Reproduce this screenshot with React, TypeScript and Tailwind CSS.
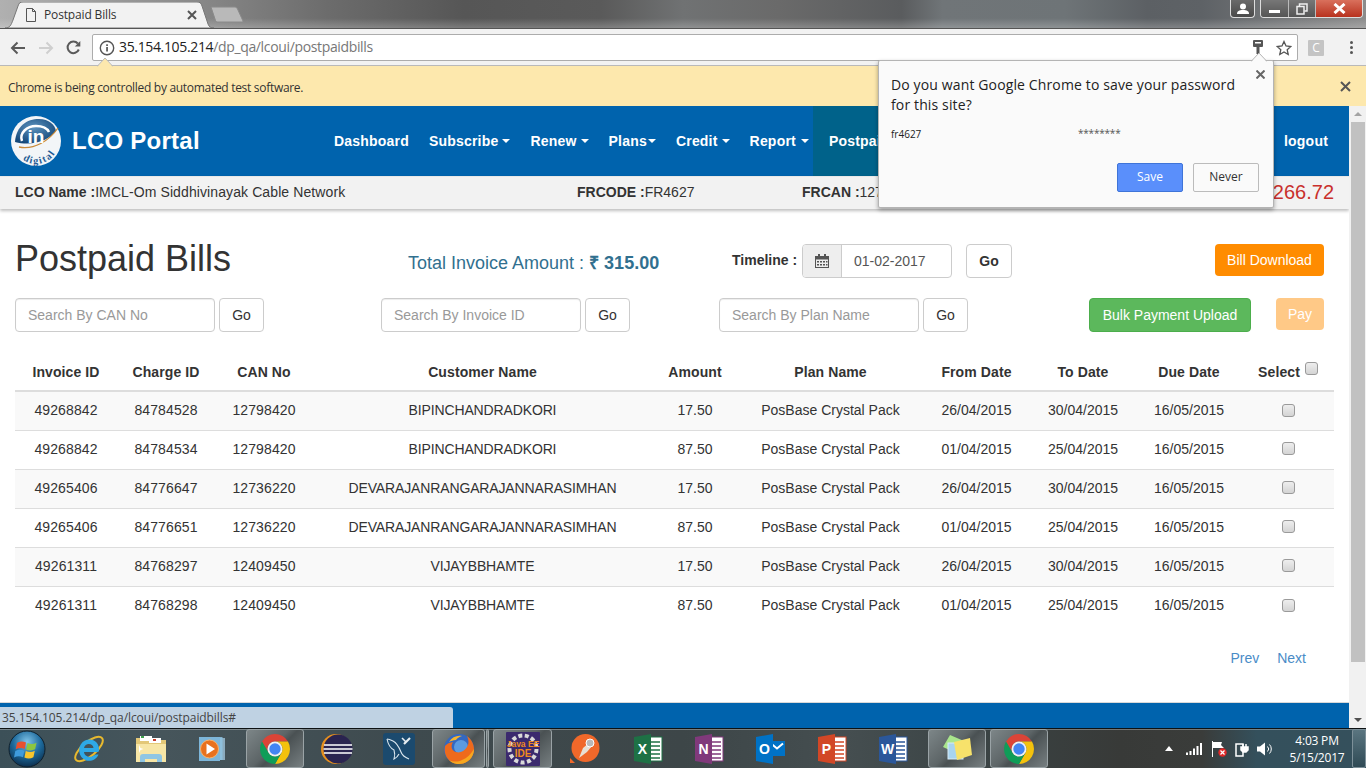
import React from "react";

const sans = "font-['Liberation_Sans',Arial,sans-serif]";
const ui = "font-['Open_Sans','Noto_Sans',sans-serif]";

const rows = [
  ["49268842", "84784528", "12798420", "BIPINCHANDRADKORI", "17.50", "26/04/2015", "30/04/2015"],
  ["49268842", "84784534", "12798420", "BIPINCHANDRADKORI", "87.50", "01/04/2015", "25/04/2015"],
  ["49265406", "84776647", "12736220", "DEVARAJANRANGARAJANNARASIMHAN", "17.50", "26/04/2015", "30/04/2015"],
  ["49265406", "84776651", "12736220", "DEVARAJANRANGARAJANNARASIMHAN", "87.50", "01/04/2015", "25/04/2015"],
  ["49261311", "84768297", "12409450", "VIJAYBBHAMTE", "17.50", "26/04/2015", "30/04/2015"],
  ["49261311", "84768298", "12409450", "VIJAYBBHAMTE", "87.50", "01/04/2015", "25/04/2015"],
];

function ChromeIcon({ size = 30 }: { size?: number }) {
  return (
    <svg width={size} height={size} viewBox="4 4 40 40">
      <path d="M6.68 14A20 20 0 0 1 41.32 14H24A10 10 0 0 0 15.34 29Z" fill="#db4437" />
      <path d="M41.32 14A20 20 0 0 1 24 44L32.66 29A10 10 0 0 0 24 14Z" fill="#f4c20d" />
      <path d="M24 44A20 20 0 0 1 6.68 14L15.34 29A10 10 0 0 0 32.66 29Z" fill="#0f9d58" />
      <circle cx="24" cy="24" r="10" fill="#f1f1f1" />
      <circle cx="24" cy="24" r="7.6" fill="#4285f4" />
    </svg>
  );
}

function Office({ c, l }: { c: string; l: string }) {
  return (
    <svg width="30" height="32" viewBox="0 0 30 32">
      <rect x="13" y="4" width="16" height="24" fill="#fff" stroke={c} strokeWidth="1" />
      <path d="M17 9h10M17 13h10M17 17h10M17 21h10M17 25h10" stroke={c} strokeWidth="1.4" />
      <path d="M1 4L18 1V31L1 28Z" fill={c} />
      <text x="9.5" y="21" textAnchor="middle" fontSize="14" fontWeight="700" fill="#fff" fontFamily="Liberation Sans">{l}</text>
    </svg>
  );
}

function TaskIcon({ name }: { name: string }) {
  switch (name) {
    case "start":
      return (
        <svg width="38" height="38" viewBox="0 0 38 38">
          <defs>
            <radialGradient id="orb" cx="50%" cy="30%" r="70%">
              <stop offset="0" stopColor="#7fc3e8" />
              <stop offset="0.55" stopColor="#1d6a9c" />
              <stop offset="1" stopColor="#0c2f4e" />
            </radialGradient>
          </defs>
          <circle cx="19" cy="19" r="18" fill="url(#orb)" stroke="#10202c" strokeWidth="1" />
          <path d="M9 13c3-2 6-2 9-.5l-1.3 6.5c-3-1.4-6-1.4-9 .3Z" fill="#e8502e" />
          <path d="M19.5 13c3 1.4 6 1.4 9-.2l-1.4 6.5c-3 1.5-6 1.5-9 .2Z" fill="#8cc63f" />
          <path d="M7.3 21c3-1.6 6-1.6 9-.3l-1.3 6.5c-3-1.4-6-1.3-9 .3Z" fill="#3f9bdc" />
          <path d="M17.8 21c3 1.4 6 1.4 9-.2l-1.4 6.5c-3 1.6-6 1.6-9 .2Z" fill="#f7c52d" />
        </svg>
      );
    case "ie":
      return (
        <svg width="32" height="32" viewBox="0 0 32 32">
          <ellipse cx="16" cy="16" rx="17" ry="7" transform="rotate(-40 16 16)" fill="none" stroke="#e8b92e" strokeWidth="2" />
          <path d="M25 19H11c.3 4.500 6.500 7 11.500 2.500h3C23 28 15 29.500 10.500 26 4 21 5 11 12 7.500 19 4.500 27 9 26 18ZM11 15h9.500c-.3-5-8.500-5.500-9.500 0Z" fill="#2ea9e6" />
        </svg>
      );
    case "files":
      return (
        <svg width="32" height="30" viewBox="0 0 32 30">
          <path d="M1 4h10l2 2h18v22H1Z" fill="#e3c878" />
          <rect x="5" y="2" width="12" height="5" fill="#fff" />
          <rect x="6" y="2" width="3" height="2" fill="#3fa34d" />
          <rect x="14" y="4" width="12" height="5" fill="#fff" />
          <rect x="18" y="5" width="3" height="2" fill="#c8402e" />
          <path d="M1 10h30v18H1Z" fill="#f7e6a6" />
          <path d="M5 28v-5c0-2 1-3 3-3h16c2 0 3 1 3 3v5h-5v-3H10v3Z" fill="#8fc6e4" />
          <path d="M4 11l1.500 3 3 1-3 1-1.500 3" fill="#fff" />
        </svg>
      );
    case "wmp":
      return (
        <svg width="28" height="26" viewBox="0 0 28 26">
          <rect x="6" y="2" width="21" height="22" fill="#a9d2ea" opacity=".7" />
          <rect x="3.500" y="1" width="21" height="23" fill="#8ec2e0" opacity=".85" />
          <rect x="1" y="1" width="21" height="24" fill="#7db6da" />
          <circle cx="11.500" cy="13" r="9" fill="#e8711e" stroke="#f9b26a" strokeWidth="1" />
          <path d="M8.500 7.500l8.500 5.500-8.500 5.500Z" fill="#fff" />
        </svg>
      );
    case "chrome":
      return <ChromeIcon />;
    case "eclipse":
      return (
        <svg width="32" height="32" viewBox="0 0 32 32">
          <circle cx="15" cy="16" r="15" fill="#e8901e" />
          <circle cx="17" cy="16" r="14.500" fill="#2a2450" />
          <path d="M3 12h28M2.500 16h29M3 20h28" stroke="#fff" strokeWidth="1.600" />
        </svg>
      );
    case "mysql":
      return (
        <svg width="32" height="32" viewBox="0 0 32 32">
          <rect width="32" height="32" rx="3" fill="#1b4a6e" />
          <path d="M4 6c2 0 4 1 6 2 4 2 6 6 8 11 1 3 3 5 8 7" fill="none" stroke="#dce8f0" strokeWidth="1.100" />
          <path d="M4 6c1 5 3 9 7 11 1 3 1 6 0 9 2-1 4-3 5-5" fill="none" stroke="#dce8f0" strokeWidth="1.100" />
          <path d="M21 11l6-6" stroke="#e8eef2" strokeWidth="2.200" />
          <path d="M19 5l4 4" stroke="#e8eef2" strokeWidth="1.600" />
        </svg>
      );
    case "firefox":
      return (
        <svg width="32" height="32" viewBox="0 0 32 32">
          <circle cx="16" cy="16" r="15" fill="#3468c0" />
          <circle cx="18" cy="14" r="7" fill="#5b9be0" />
          <path d="M2 13c-2 10 5 18 14 18 9 0 15-7 15-15 0-5-3-10-7-13 2 4 2 8 0 11-3 5-9 7-13 4-3-2-3-6-1-9L6 10c-2 1-3 2-4 3Z" fill="#ee6a1c" />
          <path d="M31 16c0 8-6 15-15 15-4 0-7-1-10-4 4 2 9 2 13 0 5-2 9-6 12-11Z" fill="#f7a71e" />
          <path d="M6 9c3-5 8-7 13-6-3 1-5 2-6 4-3 0-5 1-7 2Z" fill="#f7b52d" />
        </svg>
      );
    case "java":
      return (
        <svg width="34" height="34" viewBox="0 0 34 34">
          <rect width="34" height="34" rx="1" fill="#3b2a6e" />
          <circle cx="17" cy="17" r="13.500" fill="none" stroke="#d9d9d9" strokeWidth="4" strokeDasharray="4 2.500" />
          <text x="17" y="15" textAnchor="middle" fontSize="8.500" fontWeight="700" fill="#f08a1e" fontFamily="Liberation Sans">Java EE</text>
          <text x="17" y="25" textAnchor="middle" fontSize="10" fontWeight="700" fill="#f08a1e" fontFamily="Liberation Sans">IDE</text>
        </svg>
      );
    case "tool":
      return (
        <svg width="30" height="30" viewBox="0 0 30 30">
          <circle cx="15.500" cy="14" r="14" fill="#f0682a" />
          <path d="M0 24l5 5H0Z" fill="#f0682a" />
          <path d="M9 24l4-10 6-5 3 3-5 6-8 6Z" fill="#e8e0d4" />
          <circle cx="20" cy="9" r="4" fill="#b9b9b9" stroke="#fff" />
        </svg>
      );
    case "excel":
      return <Office c="#1e7145" l="X" />;
    case "onenote":
      return <Office c="#80397b" l="N" />;
    case "outlook":
      return (
        <svg width="30" height="32" viewBox="0 0 30 32">
          <rect x="13" y="8" width="17" height="15" fill="#0072c6" />
          <path d="M16 10.500l6 5 6-5" fill="none" stroke="#fff" strokeWidth="2" />
          <path d="M1 4L18 1V31L1 28Z" fill="#0072c6" />
          <text x="9.500" y="21" textAnchor="middle" fontSize="14" fontWeight="700" fill="#fff" fontFamily="Liberation Sans">O</text>
        </svg>
      );
    case "ppt":
      return <Office c="#d24726" l="P" />;
    case "word":
      return <Office c="#2b579a" l="W" />;
    case "sticky":
      return (
        <svg width="32" height="30" viewBox="0 0 32 30">
          <path d="M2 13L9 1l14 6-6 13Z" fill="#a9e68c" />
          <rect x="7" y="9" width="15" height="16" fill="#a8d4f0" stroke="#d8ecf8" />
          <path d="M13 8L29 4l2 17-15 5Z" fill="#f7e26b" />
        </svg>
      );
    default:
      return null;
  }
}

const taskSlots = [
  { n: "start", w: "w-[54px]" },
  { n: "ie", w: "w-[70px]" },
  { n: "files", w: "w-[54px]" },
  { n: "wmp", w: "w-[68px]" },
  { n: "chrome", w: "w-[58px]", a: true },
  { n: "eclipse", w: "w-[66px]" },
  { n: "mysql", w: "w-[58px]" },
  { n: "gap", w: "w-[4px]" },
  { n: "firefox", w: "w-[53px]", a: true },
  { n: "gap", w: "w-[1px]" },
  { n: "thin", w: "w-[3px]", a: true },
  { n: "gap", w: "w-[4px]" },
  { n: "java", w: "w-[59px]", a: true },
  { n: "tool", w: "w-[65px]" },
  { n: "excel", w: "w-[62px]" },
  { n: "onenote", w: "w-[60px]" },
  { n: "outlook", w: "w-[62px]" },
  { n: "ppt", w: "w-[62px]" },
  { n: "word", w: "w-[60px]" },
  { n: "gap", w: "w-[5px]" },
  { n: "sticky", w: "w-[58px]", a: true },
  { n: "gap", w: "w-[4px]" },
  { n: "chrome", w: "w-[58px]", a: true },
];

function Check() {
  return (
    <input
      type="checkbox"
      className="appearance-none block w-[13px] h-[13px] rounded-[3px] border border-[#9a9a9a] bg-[linear-gradient(to_bottom,#eeeeee,#d4d4d4)]"
    />
  );
}

function GoBtn({ w, bold }: { w: string; bold?: boolean }) {
  return (
    <button className={`${w} h-[34px] rounded border border-[#ccc] bg-white text-[14px] text-[#333] ${bold ? "font-bold" : ""}`}>Go</button>
  );
}

function SearchBox({ ph }: { ph: string }) {
  return (
    <input
      placeholder={ph}
      className="w-[200px] h-[34px] rounded border border-[#ccc] bg-white px-3 text-[14px] placeholder:text-[#999] shadow-[inset_0_1px_1px_rgba(0,0,0,0.075)]"
    />
  );
}

function Caret({ cls = "ml-[5px]" }: { cls?: string }) {
  return <span className={`inline-block align-middle ${cls} w-0 h-0 border-x-[4px] border-x-transparent border-t-[4px] border-t-white`} />;
}

function NavItem({ label, cls = "", caret, caretCls }: { label: string; cls?: string; caret?: boolean; caretCls?: string }) {
  return (
    <a className={`flex items-center px-[10px] h-full text-white font-bold text-[14px] tracking-[0.2px] ${cls}`}>
      {label}
      {caret && <Caret cls={caretCls} />}
    </a>
  );
}

export default function App() {
  return (
    <div className={`relative w-[1366px] h-[768px] overflow-hidden flex flex-col bg-white ${sans}`}>
      {/* Title bar */}
      <div className="relative h-[28px] shrink-0 flex items-end bg-[linear-gradient(to_bottom,rgba(255,255,255,0)_65%,rgba(255,255,255,0.22)_100%),linear-gradient(to_right,#b0b0b0_0%,#8a8a8a_14%,#6c6c6c_24%,#565656_34%,#5a5a5a_44%,#707273_50%,#6a6a6a_57%,#5a5c5e_66%,#707578_69%,#6e7477_78%,#5c6064_84%,#5e6266_88%,#8c8c8c_100%)]">
        <div className="relative w-[214px] h-[26px] ml-[4px]">
          <svg className="absolute inset-0" width="214" height="26" viewBox="0 0 214 26">
            <path d="M1 26C6 26 7 23 9 18L14 4C15 1 16 0 19 0H193C196 0 197 1 198 4L204 22C205 25 207 26 210 26Z" fill="#f2f2f2" stroke="#777" />
          </svg>
          <div className={`relative flex items-center h-full pl-[21px] pr-[21px] ${ui}`}>
            <svg width="12" height="14" viewBox="0 0 12 14" fill="none" stroke="#555" strokeWidth="1">
              <path d="M1.500.5h6l3 3v10h-9ZM7.500.5v3h3" />
            </svg>
            <span className="ml-[7px] flex-1 text-[12px] tracking-[-0.15px] text-[#333]">Postpaid Bills</span>
            <svg width="10" height="10" viewBox="0 0 10 10" stroke="#555" strokeWidth="2"><path d="M1 1l8 8M9 1l-8 8" /></svg>
          </div>
        </div>
        <svg className="ml-[-8px] mb-[5px]" width="34" height="17" viewBox="0 0 34 17">
          <path d="M1 1H25C26 1 27 2 27.500 3L33 15C33 16 32 16 31 16H8C7 16 6 15.500 5.500 14.500Z" fill="#b9b9b9" stroke="#8a8a8a" />
        </svg>
        <div className="flex-1" />
        {/* window buttons */}
        <div className="flex items-start self-start gap-[5px] mr-[3px]">
          <div className="w-[25px] h-[18px] flex items-center justify-center rounded-b-[4px] border border-t-0 border-[#ddd] bg-[linear-gradient(to_bottom,#6a6a6a,#4a4a4a)]">
            <svg width="12" height="12" viewBox="0 0 12 12" fill="#fff"><circle cx="6" cy="3.500" r="3" /><path d="M0 11c0-3 2-4 6-4s6 1 6 4Z" /></svg>
          </div>
          <div className="flex h-[18px] rounded-b-[4px] border border-t-0 border-[#ddd] overflow-hidden">
            <div className="w-[28px] flex items-center justify-center border-r border-[#bbb] bg-[linear-gradient(to_bottom,#777,#555)]">
              <div className="w-[11px] h-[3px] bg-white mt-[5px]" />
            </div>
            <div className="w-[27px] flex items-center justify-center border-r border-[#bbb] bg-[linear-gradient(to_bottom,#777,#555)]">
              <svg width="12" height="12" viewBox="0 0 12 12" fill="none" stroke="#eee" strokeWidth="1.500"><rect x="1" y="3.500" width="7" height="7.500" /><path d="M3.500 3V1H11v7H8.500" /></svg>
            </div>
            <div className="w-[46px] flex items-center justify-center bg-[linear-gradient(to_bottom,#d9705c,#b8321e)]">
              <svg width="13" height="11" viewBox="0 0 13 11" stroke="#fff" strokeWidth="3"><path d="M1.500 1l10 9M11.500 1l-10 9" /></svg>
            </div>
          </div>
        </div>
      </div>

      {/* Toolbar */}
      <div className={`relative h-[37px] shrink-0 flex items-center bg-[#f2f2f2] border-t border-[#555] pb-[1px] pt-[2px] ${ui}`}>
        <div className="w-[92px] flex items-center pl-[10px] gap-[12px]">
          <svg width="16" height="14" viewBox="0 0 16 14" fill="none" stroke="#5a5a5a" strokeWidth="2"><path d="M15 7H2M7.500 1.500L2 7l5.500 5.500" /></svg>
          <svg width="16" height="14" viewBox="0 0 16 14" fill="none" stroke="#cfcfcf" strokeWidth="2"><path d="M1 7h13M8.500 1.500L14 7l-5.500 5.500" /></svg>
          <svg width="15" height="15" viewBox="0 0 15 15" fill="none" stroke="#5a5a5a" strokeWidth="2"><path d="M12.800 9.500A5.800 5.800 0 1 1 11.800 3.500" /><path d="M14.300 1v5.500H8.800" fill="#5a5a5a" stroke="none" /></svg>
        </div>
        <div className="relative w-[1206px] h-[27px] flex items-center bg-white border border-[#acacac] rounded-[2px] pl-[6px]">
          <svg width="16" height="16" viewBox="0 0 16 16">
            <circle cx="8" cy="8" r="6.700" fill="none" stroke="#555" strokeWidth="1.400" />
            <rect x="7.200" y="7" width="1.700" height="4.500" fill="#555" />
            <rect x="7.200" y="4.300" width="1.700" height="1.700" fill="#555" />
          </svg>
          <span className="ml-[4px] mt-[-2px] text-[14px] tracking-[-0.35px] text-[#222]">35.154.105.214<span className="text-[#777]">/dp_qa/lcoui/postpaidbills</span></span>
          <div className="flex-1" />
          <svg className="mr-[12px]" width="12" height="15" viewBox="0 0 12 15">
            <rect x="1" y="0" width="10" height="7" rx="1" fill="#555" />
            <rect x="3" y="2" width="6" height="1.500" fill="#fff" />
            <rect x="4.500" y="7" width="3" height="7" fill="#555" />
          </svg>
          <svg className="mr-[5px]" width="16" height="16" viewBox="0 0 16 16" fill="none" stroke="#555" strokeWidth="1.300"><path d="M8 1.500l2 4.500 4.800.5-3.600 3.200 1 4.800L8 12l-4.200 2.500 1-4.800L1.200 6.500 6 6Z" /></svg>
        </div>
        <div className="ml-[10px] w-[16px] h-[16px] bg-[#c4c4c4] flex items-center justify-center text-[12px] text-white rounded-[1px]">C</div>
        <div className="ml-[26px] flex flex-col gap-[2px]">
          <div className="w-[3px] h-[3px] rounded-full bg-[#555]" />
          <div className="w-[3px] h-[3px] rounded-full bg-[#555]" />
          <div className="w-[3px] h-[3px] rounded-full bg-[#555]" />
        </div>
      </div>

      {/* Infobar */}
      <div className={`relative h-[41px] shrink-0 flex items-center justify-between bg-[#fde8ad] border-t border-[#b9b9b9] pl-[8px] pr-[15px] ${ui}`}>
        <span className="mt-[3px] text-[12px] text-[#333] tracking-[-0.3px]">Chrome is being controlled by automated test software.</span>
        <svg width="11" height="11" viewBox="0 0 11 11" stroke="#555" strokeWidth="2"><path d="M1 1l9 9M10 1l-9 9" /></svg>
        <svg className="absolute left-[97px] top-[-8px]" width="16" height="9" viewBox="0 0 16 9">
          <path d="M0 9L8 0l8 9Z" fill="#fde8ad" />
          <path d="M0 8.500L8 0l8 8.500" fill="none" stroke="#b9b9b9" />
        </svg>
      </div>

      {/* Page */}
      <div className="flex-1 flex min-h-0">
        <div className="flex-1 min-w-0 flex flex-col text-[#333]">
          <div className="h-[70px] shrink-0 flex items-stretch bg-[#0063ad]">
            <div className="w-[324px] flex items-center pl-[11px]">
              <svg width="50" height="50" viewBox="0 0 50 50">
                <defs>
                  <path id="dg" d="M11 43A22.500 22.500 0 0 0 47.500 24" />
                  <radialGradient id="ball" cx="45%" cy="35%" r="65%">
                    <stop offset="0" stopColor="#5d92bd" />
                    <stop offset="1" stopColor="#14487a" />
                  </radialGradient>
                </defs>
                <circle cx="25" cy="25" r="25" fill="#f2f5f8" />
                <path d="M4 26C5 10 16 3 28 3c10 0 16 6 17 12-6 8-22 16-41 11Z" fill="url(#ball)" />
                <path d="M8 31c15 3 30-6 39-19" fill="none" stroke="#c98a3a" strokeWidth="1.300" />
                <path d="M11 25c-3-8 5-15 14-15 6 0 11 2 13 6" fill="none" stroke="#fff" strokeWidth="2.500" />
                <text x="25" y="27" textAnchor="middle" fontSize="19" fontWeight="700" fill="#fff" fontFamily="Liberation Sans">in</text>
                <text fontSize="10" fontWeight="700" fill="#1d5a94" fontFamily="Liberation Serif" letterSpacing="1.500">
                  <textPath href="#dg" startOffset="2%">digital</textPath>
                </text>
              </svg>
              <span className="ml-[11px] text-white font-bold text-[24px] leading-none tracking-[0.25px]">LCO Portal</span>
            </div>
            <NavItem label="Dashboard" />
            <NavItem label="Subscribe" caret caretCls="ml-[4px]" />
            <NavItem label="Renew" caret caretCls="ml-[4px]" />
            <NavItem label="Plans" caret caretCls="ml-[1px]" />
            <NavItem label="Credit" caret caretCls="ml-[4px]" />
            <NavItem label="Report" caret caretCls="ml-[5px]" />
            <NavItem label="Postpaid Bills" cls="bg-[#00628a] ml-[-6px] px-[16px]" />
            <div className="flex-1" />
            <NavItem label="logout" cls="mr-[11px]" />
          </div>
          <div className="h-[33px] shrink-0 flex items-center bg-[#f2f2f2] border-t border-[#e8e8e8] pl-[15px] pr-[15px] pb-[2px] text-[14px] shadow-[0_2px_3px_rgba(0,0,0,0.25)]">
            <div className="w-[562px]"><b>LCO Name :</b><span className="tracking-[0.1px]">IMCL-Om Siddhivinayak Cable Network</span></div>
            <div className="w-[225px]"><b>FRCODE :</b>FR4627</div>
            <div className="flex-1"><b>FRCAN :</b>127</div>
            <div className="text-[20px] text-[#c9302c]">266.72</div>
          </div>
          <div className="flex-1 min-h-0 px-[15px] pt-[35px]">
            <div className="flex items-start h-[34px]">
              <h1 className="w-[393px] text-[36px] leading-[30px] font-normal">Postpaid Bills</h1>
              <div className="w-[324px] mt-[9px] text-[18px] leading-[20px] text-[#31708f]">Total Invoice Amount : <b>₹ 315.00</b></div>
              <div className="w-[70px] mt-[6px] font-bold text-[14px] leading-[20px]">Timeline :</div>
              <div className="flex w-[150px] h-[34px] rounded border border-[#ccc] overflow-hidden">
                <div className="w-[39px] flex items-center justify-center bg-[#eee] border-r border-[#ccc]">
                  <svg width="14" height="14" viewBox="0 0 14 14" fill="#555">
                    <path d="M0 2h14v12H0ZM1 5.500v7.500h12V5.500Z" />
                    <path d="M3 0h2v3H3ZM9 0h2v3H9Z" />
                    <path d="M2 7h2v1.500H2ZM5 7h2v1.500H5ZM8 7h2v1.500H8ZM11 7h1.500v1.500H11ZM2 10h2v1.500H2ZM5 10h2v1.500H5ZM8 10h2v1.500H8ZM11 10h1.500v1.500H11Z" />
                  </svg>
                </div>
                <div className="flex-1 flex items-center pl-[12px] text-[14px] text-[#555]">01-02-2017</div>
              </div>
              <div className="ml-[14px]"><GoBtn w="w-[46px]" bold /></div>
              <div className="flex-1" />
              <button className="w-[109px] h-[32px] mr-[10px] rounded bg-[#ff8c00] text-white text-[14px]">Bill Download</button>
            </div>
            <div className="flex items-start mt-[20px] h-[34px]">
              <SearchBox ph="Search By CAN No" />
              <div className="ml-[4px]"><GoBtn w="w-[45px]" /></div>
              <div className="ml-[117px]"><SearchBox ph="Search By Invoice ID" /></div>
              <div className="ml-[4px]"><GoBtn w="w-[45px]" /></div>
              <div className="ml-[89px]"><SearchBox ph="Search By Plan Name" /></div>
              <div className="ml-[4px]"><GoBtn w="w-[45px]" /></div>
              <button className="ml-[121px] w-[162px] h-[34px] rounded border border-[#4cae4c] bg-[#5cb85c] text-white text-[14px]">Bulk Payment Upload</button>
              <button className="ml-[25px] w-[48px] h-[32px] rounded bg-[#ffc987] text-[#fff] text-[14px]">Pay</button>
            </div>
            <table className="mt-[20px] w-[1319px] table-fixed border-collapse text-[14px]">
              <colgroup>
                <col className="w-[102px]" />
                <col className="w-[98px]" />
                <col className="w-[98px]" />
                <col className="w-[339px]" />
                <col className="w-[86px]" />
                <col className="w-[185px]" />
                <col className="w-[107px]" />
                <col className="w-[106px]" />
                <col className="w-[106px]" />
                <col className="w-[92px]" />
              </colgroup>
              <thead>
                <tr className="h-[39px] border-b-2 border-[#ddd]">
                  {["Invoice ID", "Charge ID", "CAN No", "Customer Name", "Amount", "Plan Name", "From Date", "To Date", "Due Date"].map((h) => (
                    <th key={h} className="font-bold text-center p-0 pt-[2px] tracking-[0.1px]">{h}</th>
                  ))}
                  <th className="font-bold p-0 pt-[2px]">
                    <span className="inline-flex items-start tracking-[0.1px]">Select<span className="ml-[5px]"><Check /></span></span>
                  </th>
                </tr>
              </thead>
              <tbody>
                {rows.map((r, i) => (
                  <tr key={i} className={`h-[39px] text-center ${i > 0 ? "border-t border-[#ddd]" : ""} ${i % 2 === 0 ? "bg-[#f9f9f9]" : "bg-white"}`}>
                    <td className="p-0 tracking-[0.1px]">{r[0]}</td>
                    <td className="p-0 tracking-[0.1px]">{r[1]}</td>
                    <td className="p-0 tracking-[0.1px]">{r[2]}</td>
                    <td className="p-0 tracking-[-0.14px]">{r[3]}</td>
                    <td className="p-0">{r[4]}</td>
                    <td className="p-0">PosBase Crystal Pack</td>
                    <td className="p-0">{r[5]}</td>
                    <td className="p-0">{r[6]}</td>
                    <td className="p-0">16/05/2015</td>
                    <td className="p-0"><span className="inline-block align-middle mt-[-3px]"><Check /></span></td>
                  </tr>
                ))}
              </tbody>
            </table>
            <div className="flex justify-end gap-[18px] mt-[23px] pr-[28px] text-[14px] leading-[20px] text-[#4a8cc7]">
              <a>Prev</a>
              <a>Next</a>
            </div>
          </div>
          <div className="h-[26px] shrink-0 bg-[#0063ad] border-t border-[#d8d8d8]" />
        </div>
        {/* scrollbar */}
        <div className="w-[17px] shrink-0 flex flex-col items-center bg-[#f1f1f1]">
          <div className="h-[16px] flex items-center justify-center">
            <div className="w-0 h-0 border-x-[4px] border-x-transparent border-b-[4px] border-b-[#a3a3a3]" />
          </div>
          <div className="w-[14px] h-[540px] bg-[#c1c1c1]" />
          <div className="flex-1" />
          <div className="h-[16px] flex items-center justify-center">
            <div className="w-0 h-0 border-x-[4px] border-x-transparent border-t-[4px] border-t-[#505050]" />
          </div>
        </div>
      </div>

      {/* Taskbar */}
      <div className={`h-[40px] shrink-0 flex items-stretch border-t border-[#0d1214] shadow-[inset_0_1px_0_rgba(255,255,255,0.3)] bg-[linear-gradient(to_right,#3c5058_0%,#46555b_12%,#3e4a4e_30%,#3d4648_50%,#454e50_62%,#3a4344_72%,#383a38_82%,#3a3c3a_88%,#34505c_92%,#35505c_100%)] ${ui}`}>
        {taskSlots.map((s, i) => (
          <div
            key={i}
            className={`${s.w} shrink-0 flex items-center justify-center ${s.a ? "rounded-[3px] border border-[#9aa3a6] bg-[linear-gradient(135deg,#7d8688_0%,#5d6567_45%,#4a5153_55%,#777f81_100%)]" : ""}`}
          >
            <TaskIcon name={s.n} />
          </div>
        ))}
        <div className="flex-1 flex items-center justify-end text-white">
          <svg className="mr-[13px]" width="8" height="5" viewBox="0 0 8 5" fill="#fff"><path d="M0 5l4-5 4 5Z" /></svg>
          <svg className="mr-[9px]" width="16" height="12" viewBox="0 0 16 12" fill="#fff"><path d="M0 9.500h2V12H0ZM3.500 8h2v4h-2ZM7 5.500h2V12H7ZM10.500 3h2v9h-2ZM14 0h2v12h-2Z" /></svg>
          <svg className="mr-[8px]" width="16" height="16" viewBox="0 0 16 16">
            <path d="M1 0h1v16H1ZM2 1h9l-1 3 3 3H2Z" fill="#fff" />
            <circle cx="11.500" cy="11.500" r="4.200" fill="#e02828" />
            <path d="M9.500 9.500l4 4M13.500 9.500l-4 4" stroke="#fff" strokeWidth="1.200" />
          </svg>
          <svg className="mr-[8px]" width="14" height="16" viewBox="0 0 14 16" fill="none" stroke="#fff" strokeWidth="1.500">
            <path d="M1 3h7v12H1Z" />
            <path d="M6 6h7v3l-2 2H8L6 9ZM8 3v3M11 3v3" fill="#fff" />
          </svg>
          <svg className="mr-[16px]" width="16" height="14" viewBox="0 0 16 14">
            <path d="M0 4.500h3L8 .5v13l-5-4H0Z" fill="#fff" />
            <path d="M10.500 4.500a3.500 3.500 0 0 1 0 5M12.500 2.500a6.500 6.500 0 0 1 0 9" fill="none" stroke="#fff" />
          </svg>
          <div className="w-[56px] text-center text-[12px] leading-[17px] tracking-[-0.2px]">
            <div>4:03 PM</div>
            <div>5/15/2017</div>
          </div>
          <div className="ml-[7px] w-[14px] self-stretch border border-[#7d9099] rounded-[2px] bg-[linear-gradient(to_bottom,#5a7580,#2f4a55)]" />
        </div>
      </div>

      {/* Status bubble */}
      <div className={`absolute left-0 top-[707px] w-[453px] h-[21px] flex items-center pl-[2px] bg-[#bfd2e3] rounded-tr-[3px] text-[12px] tracking-[-0.08px] text-[#444] ${ui}`}>
        35.154.105.214/dp_qa/lcoui/postpaidbills#
      </div>

      {/* Password bubble */}
      <div className={`absolute left-[878px] top-[60px] w-[396px] h-[148px] bg-[#fafafa] border border-[#b4b4b4] rounded-[2px] shadow-[0_2px_4px_rgba(0,0,0,0.35)] text-[#222] ${ui}`}>
        <svg className="absolute left-[372px] top-[-8px]" width="16" height="9" viewBox="0 0 16 9">
          <path d="M0 9L8 0l8 9Z" fill="#fafafa" />
          <path d="M0 8.500L8 0l8 8.500" fill="none" stroke="#b4b4b4" />
        </svg>
        <svg className="absolute left-[377px] top-[9px]" width="9" height="9" viewBox="0 0 9 9" stroke="#666" strokeWidth="2"><path d="M.5.500l8 8M8.500.500l-8 8" /></svg>
        <div className="absolute left-[12px] top-[14px] w-[370px] text-[14px] leading-[20px] tracking-[0.13px]">Do you want Google Chrome to save your password<br />for this site?</div>
        <div className="absolute left-[12px] top-[66px] text-[10px] leading-[14px]">fr4627</div>
        <div className="absolute left-[199px] top-[65px] text-[10px] leading-[14px] tracking-[-0.2px] text-[#555]">********</div>
        <div className="absolute right-[14px] top-[102px] flex gap-[10px] text-[12px]">
          <button className="w-[66px] h-[29px] pb-[2px] rounded-[2px] bg-[#5a8ffb] border border-[#3f74d8] text-white">Save</button>
          <button className="w-[66px] h-[29px] pb-[2px] rounded-[2px] bg-[#fafafa] border border-[#bbb] text-[#333]">Never</button>
        </div>
      </div>
    </div>
  );
}
